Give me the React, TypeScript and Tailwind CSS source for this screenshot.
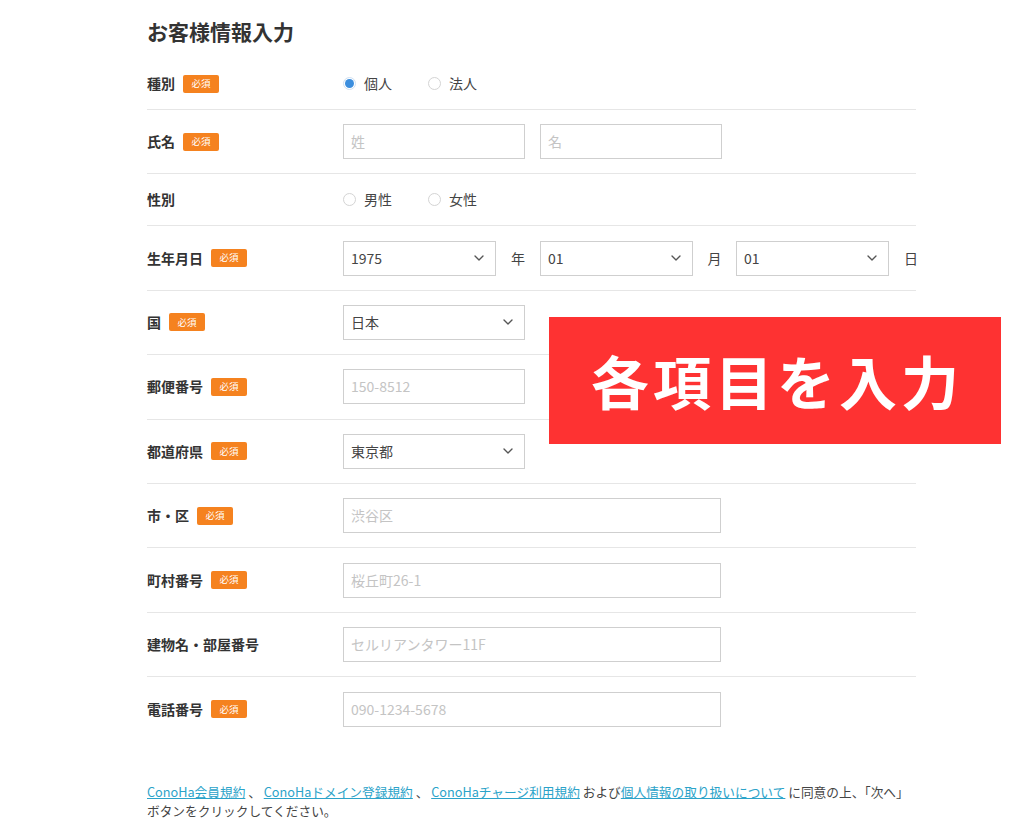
import { ChevronDown } from 'lucide-react'

const Badge = () => (
  <span className="ml-[8px] inline-flex h-[18px] w-[36px] items-center justify-center rounded-[2px] bg-[#f5821f] text-[9.5px] font-normal leading-none text-white">
    必須
  </span>
)

const Label = ({ text, required }: { text: string; required?: boolean }) => (
  <div className="flex w-[196px] shrink-0 items-center text-[14px] font-bold text-[#333]">
    <span>{text}</span>
    {required ? <Badge /> : null}
  </div>
)

const Input = ({ placeholder, width }: { placeholder: string; width: string }) => (
  <div
    className={`flex h-[35px] items-center border border-[#cfcfcf] bg-white px-[7px] text-[14px] text-[#c4c4c4] ${width}`}
  >
    {placeholder}
  </div>
)

const Select = ({ value, width }: { value: string; width: string }) => (
  <div
    className={`flex h-[35px] items-center justify-between border border-[#cfcfcf] bg-white pl-[7px] pr-[8px] text-[14px] text-[#444] ${width}`}
  >
    <span>{value}</span>
    <ChevronDown size={16} strokeWidth={2} className="text-[#555]" />
  </div>
)

const Radio = ({ label, checked }: { label: string; checked?: boolean }) => (
  <label className="flex items-center text-[14px] text-[#444]">
    <span
      className={`mr-[8px] flex h-[13px] w-[13px] items-center justify-center rounded-full border ${
        checked ? 'border-[#cfe0f2] bg-white' : 'border-[#d4d4d4] bg-white'
      }`}
    >
      {checked ? <span className="h-[9px] w-[9px] rounded-full bg-[#3b8ede]" /> : null}
    </span>
    {label}
  </label>
)

const Row = ({ children, tall = true, last }: { children: React.ReactNode; tall?: boolean; last?: boolean }) => (
  <div
    className={`flex items-center ${tall ? 'h-[64.4px]' : 'h-[52px]'} ${last ? '' : 'border-b border-[#e6e6e6]'}`}
  >
    {children}
  </div>
)

export default function App() {
  return (
    <div
      className="relative min-h-[836px] w-[1024px] overflow-hidden bg-white"
      style={{ fontFamily: '"Noto Sans CJK JP", "Noto Sans", sans-serif' }}
    >
      <div className="w-[916px] pl-[147px]">
        <h1 className="pt-[16px] text-[21px] font-bold leading-[30px] text-[#333]">お客様情報入力</h1>

        <div className="mt-[12px]">
          <Row tall={false}>
            <Label text="種別" required />
            <div className="flex items-center gap-[36px]">
              <Radio label="個人" checked />
              <Radio label="法人" />
            </div>
          </Row>
          <Row>
            <Label text="氏名" required />
            <div className="flex gap-[15px]">
              <Input placeholder="姓" width="w-[182px]" />
              <Input placeholder="名" width="w-[182px]" />
            </div>
          </Row>
          <Row tall={false}>
            <Label text="性別" />
            <div className="flex items-center gap-[36px]">
              <Radio label="男性" />
              <Radio label="女性" />
            </div>
          </Row>
          <Row>
            <Label text="生年月日" required />
            <div className="flex items-center text-[14px] text-[#444]">
              <Select value="1975" width="w-[153px]" />
              <span className="w-[44px] text-center">年</span>
              <Select value="01" width="w-[153px]" />
              <span className="w-[43px] text-center">月</span>
              <Select value="01" width="w-[153px]" />
              <span className="w-[29px] text-right">日</span>
            </div>
          </Row>
          <Row>
            <Label text="国" required />
            <Select value="日本" width="w-[182px]" />
          </Row>
          <Row>
            <Label text="郵便番号" required />
            <Input placeholder="150-8512" width="w-[182px]" />
          </Row>
          <Row>
            <Label text="都道府県" required />
            <Select value="東京都" width="w-[182px]" />
          </Row>
          <Row>
            <Label text="市・区" required />
            <Input placeholder="渋谷区" width="w-[378px]" />
          </Row>
          <Row>
            <Label text="町村番号" required />
            <Input placeholder="桜丘町26-1" width="w-[378px]" />
          </Row>
          <Row>
            <Label text="建物名・部屋番号" />
            <Input placeholder="セルリアンタワー11F" width="w-[378px]" />
          </Row>
          <Row last>
            <Label text="電話番号" required />
            <Input placeholder="090-1234-5678" width="w-[378px]" />
          </Row>
        </div>

        <p className="mt-[40px] text-[12.7px] leading-[19px] text-[#444]">
          <a className="text-[#2ba3c9] underline">ConoHa会員規約</a> 、{' '}
          <a className="text-[#2ba3c9] underline">ConoHaドメイン登録規約</a> 、{' '}
          <a className="text-[#2ba3c9] underline">ConoHaチャージ利用規約</a> および
          <a className="text-[#2ba3c9] underline">個人情報の取り扱いについて</a> に同意の上、「次へ」
          <br />
          ボタンをクリックしてください。
        </p>
      </div>

      <div className="absolute left-[549px] top-[317px] flex h-[127px] w-[452px] items-center justify-center bg-[#fe3232] pl-[4px] text-[58px] font-bold tracking-[4px] text-white">
        各項目を入力
      </div>
    </div>
  )
}
